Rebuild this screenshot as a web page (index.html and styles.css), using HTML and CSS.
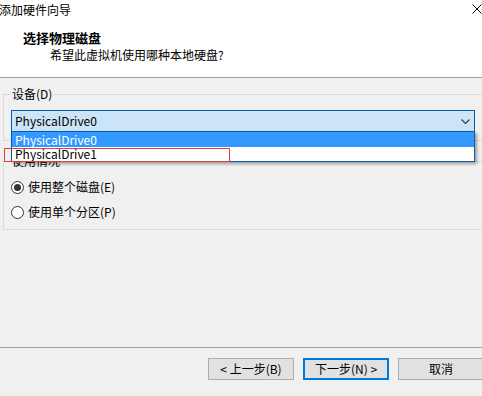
FILE: index.html
```html
<!DOCTYPE html>
<html lang="zh-CN">
    <head>
        <meta charset="UTF-8" />
        <meta name="viewport" content="width=device-width, initial-scale=1.0" />
        <title>添加硬件向导</title>
        <link rel="stylesheet" href="styles.css">
    </head>
    <body>
        <div class="wizard">
            <header class="head">
                <div class="titlebar">
                    <span class="title">添加硬件向导</span>
                    <svg class="close" width="10" height="10" viewBox="0 0 10 10">
                        <path d="M0.5 0.5 L9.5 9.5 M9.5 0.5 L0.5 9.5" stroke="#000" stroke-width="1" fill="none"/>
                    </svg>
                </div>
                <div class="heading">选择物理磁盘</div>
                <div class="subtitle">希望此虚拟机使用哪种本地硬盘?</div>
            </header>

            <main class="content">
                <fieldset class="group group-device">
                    <legend>设备(D)</legend>
                    <div class="combo">
                        <span>PhysicalDrive0</span>
                        <svg class="chevron" width="9" height="5" viewBox="0 0 9 5">
                            <path d="M0.5 0.5 L4.5 4.5 L8.5 0.5" stroke="#404040" stroke-width="1.2" fill="none"/>
                        </svg>
                    </div>
                </fieldset>

                <fieldset class="group group-usage">
                    <legend>使用情况</legend>
                    <label class="radio">
                        <span class="dot checked"></span>
                        <span>使用整个磁盘(E)</span>
                    </label>
                    <label class="radio">
                        <span class="dot"></span>
                        <span>使用单个分区(P)</span>
                    </label>
                </fieldset>
            </main>

            <ul class="dropdown">
                <li class="selected">PhysicalDrive0</li>
                <li>PhysicalDrive1</li>
            </ul>
            <div class="mark"></div>

            <footer class="foot">
                <button class="btn">&lt; 上一步(B)</button>
                <button class="btn focus">下一步(N) &gt;</button>
                <button class="btn">取消</button>
            </footer>
        </div>
    </body>
</html>
```

FILE: styles.css
```css
body {
  margin: 0;
  background: #f0f0f0;
  font-family: "Noto Sans CJK SC", "Noto Sans", sans-serif;
  font-size: 12px;
  color: #000;
}

.wizard {
  position: relative;
  width: 482px;
  height: 396px;
  overflow: hidden;
  display: flex;
  flex-direction: column;
}

/* top white banner */
.head {
  background: #fff;
  height: 77px;
  border-bottom: 1px solid #a0a0a0;
  flex-shrink: 0;
}

.titlebar {
  display: flex;
  justify-content: space-between;
  align-items: flex-start;
  padding-top: 2px;
  height: 16px;
  line-height: 16px;
}

.title {
  margin-left: -1px;
}

.close {
  margin-top: 2px;
}

.heading {
  margin-top: 12px;
  padding-left: 23px;
  font-size: 13px;
  font-weight: bold;
  line-height: 16px;
}

.subtitle {
  margin-top: 1px;
  padding-left: 50px;
  line-height: 16px;
}

.content {
  flex: 1;
}

.group {
  margin: 0 0 0 3px;
  width: 500px;
  padding: 0 0 0 7px;
  border: 1px solid #dcdcdc;
  box-sizing: border-box;
}

.group legend {
  padding: 0 1px;
  line-height: 14px;
}

.group-device {
  margin-top: 9px;
  padding-bottom: 8px;
}

.group-usage {
  margin-top: 13px;
  padding-bottom: 7px;
}

.combo {
  margin-top: 9px;
  width: 464px;
  height: 22px;
  box-sizing: border-box;
  border: 1px solid #0a5aa6;
  background: #cce4f7;
  display: flex;
  align-items: center;
  justify-content: space-between;
  padding: 0 4px 0 3px;
  line-height: 18px;
}

.chevron {
  margin-top: 1px;
}

.radio {
  display: flex;
  align-items: center;
  gap: 4px;
  height: 20px;
  line-height: 20px;
}

.radio:first-of-type {
  margin-top: 9px;
}

.radio + .radio {
  margin-top: 5px;
}

.dot {
  width: 13px;
  height: 13px;
  box-sizing: border-box;
  border: 1px solid #333;
  border-radius: 50%;
  background: #fff;
  display: flex;
  align-items: center;
  justify-content: center;
}

.dot.checked::after {
  content: "";
  width: 7px;
  height: 7px;
  border-radius: 50%;
  background: #333;
}

/* open combo list, drawn over the groups */
.dropdown {
  position: absolute;
  left: 11px;
  top: 131px;
  width: 464px;
  margin: 0;
  padding: 0;
  list-style: none;
  box-sizing: border-box;
  border: 1px solid #0a5aa6;
  background: #fff;
  box-shadow: 2px 2px 3px rgba(0, 0, 0, 0.35);
}

.dropdown li {
  height: 14px;
  line-height: 14px;
  padding-left: 3px;
}

.dropdown li.selected {
  height: 15px;
  line-height: 15px;
  background: #3399ff;
  color: #fff;
}

.mark {
  position: absolute;
  left: 4px;
  top: 148px;
  width: 226px;
  height: 14px;
  box-sizing: border-box;
  border: 1px solid #e23c3c;
}

.foot {
  flex-shrink: 0;
  height: 38px;
  border-top: 1px solid #a0a0a0;
  display: flex;
  gap: 9px;
  padding: 10px 0 0 208px;
  box-sizing: content-box;
}

.btn {
  flex-shrink: 0;
  width: 86px;
  height: 22px;
  padding: 0;
  border: 1px solid #adadad;
  background: #e1e1e1;
  font-family: inherit;
  font-size: 12px;
  line-height: 18px;
  color: #000;
}

.btn.focus {
  border: 2px solid #0078d7;
}
```
